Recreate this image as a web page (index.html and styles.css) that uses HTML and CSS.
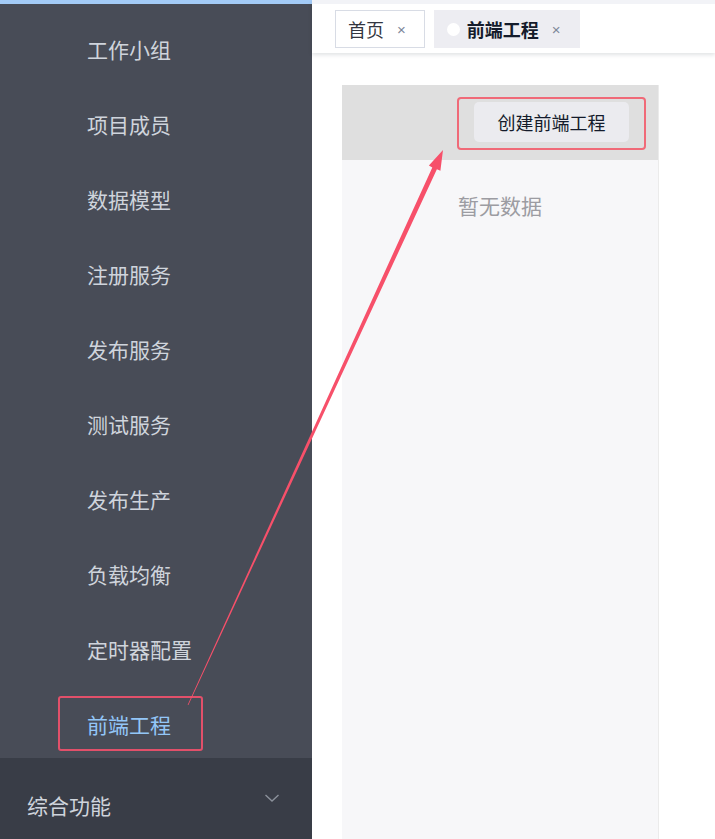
FILE: index.html
```html
<!DOCTYPE html>
<html lang="zh">
<head>
<meta charset="utf-8">
<title>前端工程</title>
<link rel="stylesheet" href="styles.css">
</head>
<body>
<aside class="sidebar">
  <div class="topline"></div>
  <ul class="menu">
    <li class="item">工作小组</li>
    <li class="item">项目成员</li>
    <li class="item">数据模型</li>
    <li class="item">注册服务</li>
    <li class="item">发布服务</li>
    <li class="item">测试服务</li>
    <li class="item">发布生产</li>
    <li class="item">负载均衡</li>
    <li class="item">定时器配置</li>
    <li class="item active">前端工程</li>
  </ul>
  <div class="submenu">
    <span>综合功能</span>
    <svg class="chev" width="16" height="10" viewBox="0 0 16 10"><path d="M1.5 2 L8 8 L14.5 2" fill="none" stroke="#8b919b" stroke-width="1.4"/></svg>
  </div>
</aside>
<main class="main">
  <header class="header">
    <div class="tab">首页<span class="x">×</span></div>
    <div class="tab current"><span class="dot"></span>前端工程<span class="x">×</span></div>
  </header>
  <section class="panel">
    <div class="toolbar">
      <div class="mark-box"><button class="btn">创建前端工程</button></div>
    </div>
    <div class="empty">暂无数据</div>
  </section>
</main>
<svg class="arrow" width="715" height="839" viewBox="0 0 715 839">
  <polygon points="187.6,704.9 432.3,167.4 428.9,165.6 443,150 440.4,170.8 436.9,169.2 188.4,705.1" fill="#f7506a"/>
</svg>
</body>
</html>
```
FILE: styles.css
```css
*, *::before, *::after { box-sizing: border-box; }
html, body { margin: 0; padding: 0; }
body {
  width: 715px;
  height: 839px;
  overflow: hidden;
  display: flex;
  font-family: "Noto Sans CJK SC", "Noto Sans", sans-serif;
  background: #fff;
  position: relative;
}
.sidebar {
  width: 312px;
  flex: none;
  display: flex;
  flex-direction: column;
  background: #484c57;
}
.topline { height: 4px; background: #a3cbf7; }
.menu {
  list-style: none;
  margin: 0;
  padding: 7px 0 0;
  height: 754px;
  overflow: hidden;
}
.item {
  height: 75px;
  display: flex;
  align-items: center;
  padding-left: 87px;
  font-size: 21px;
  color: #cfd4dc;
}
.item.active { color: #93c6f7; position: relative; }
.item.active::after {
  content: "";
  position: absolute;
  left: 58px;
  top: 10px;
  width: 145px;
  height: 55px;
  border: 2px solid #e2506a;
  border-radius: 3px;
}
.submenu {
  flex: 1;
  background: #393d47;
  display: flex;
  align-items: center;
  justify-content: space-between;
  padding: 13px 32px 0 27px;
  font-size: 21px;
  color: #cfd4dc;
}
.chev { margin-top: -14px; }
.main {
  flex: 1;
  display: flex;
  flex-direction: column;
  min-width: 0;
}
.header {
  height: 53px;
  border-top: 4px solid #f2f3f7;
  display: flex;
  gap: 9px;
  padding: 6px 0 0 23px;
  box-shadow: 0 2px 4px rgba(0, 21, 41, 0.12);
  position: relative;
  z-index: 1;
}
.tab {
  height: 38px;
  display: flex;
  align-items: center;
  font-size: 18px;
  color: #333640;
  border: 1px solid #d8dce5;
  padding: 0 18px 0 12px;
}
.tab .x {
  font-family: "Liberation Sans", sans-serif;
  font-size: 15px;
  font-weight: normal;
  color: #7d8799;
  margin-left: 13px;
}
.tab.current {
  background: #ededf2;
  border-color: #ededf2;
  color: #141b2b;
  font-weight: bold;
  padding: 0 18px 0 12px;
}
.dot {
  width: 13px;
  height: 13px;
  border-radius: 50%;
  background: #fff;
  margin-right: 7px;
}
.panel {
  margin: 32px 0 0 30px;
  width: 317px;
  flex: 1;
  background: #f7f7f9;
  border-right: 1px solid #ebebeb;
  display: flex;
  flex-direction: column;
  align-items: center;
}
.toolbar {
  align-self: stretch;
  height: 75px;
  background: #dfdfdf;
  display: flex;
  justify-content: flex-end;
  align-items: flex-start;
  padding: 12px 12px 0 0;
}
.mark-box {
  border: 2px solid #f06a78;
  border-radius: 4px;
  padding: 3px 15px 6px;
}
.btn {
  width: 155px;
  height: 40px;
  border: 0;
  border-radius: 5px;
  background: #ebebef;
  font-family: inherit;
  font-size: 18px;
  color: #141b2b;
  padding: 0;
}
.empty {
  margin-top: 30px;
  font-size: 21px;
  color: #9c9ca2;
}
.arrow {
  position: absolute;
  left: 0;
  top: 0;
  pointer-events: none;
  z-index: 5;
}
```
